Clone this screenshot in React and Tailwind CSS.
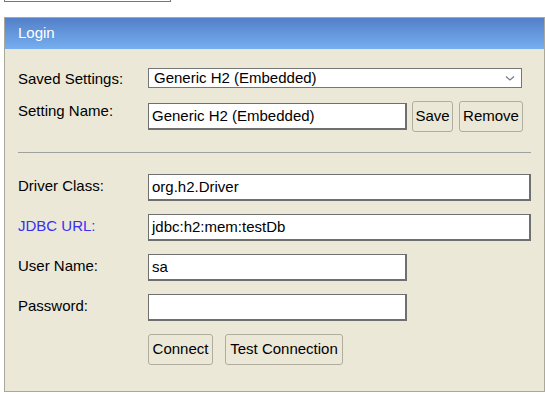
import React from "react";

const font = { fontFamily: '"Liberation Sans", Arial, sans-serif' };

function Label({ children, className = "" }) {
  return (
    <div className={"w-[130px] shrink-0 text-[15px] leading-[17px] " + className}>
      {children}
    </div>
  );
}

function TextInput({ value, w }) {
  return (
    <div
      className={
        "h-[27px] bg-white border-t border-l border-r-2 border-b-2 border-[#6f6f6f] pl-[3px] flex items-center text-[15px] text-black " +
        w
      }
    >
      {value}
    </div>
  );
}

function Btn({ children, w }) {
  return (
    <div
      className={
        "h-[31px] flex items-center justify-center rounded-[3px] border border-[#b0ad9f] bg-[#ebe8d8] text-[15px] text-black " +
        w
      }
    >
      {children}
    </div>
  );
}

export default function App() {
  return (
    <div className="w-[545px] h-[394px] bg-white overflow-hidden" style={font}>
      <div className="ml-[4px] w-[167px] h-[2px] border-l border-r border-b border-[#767676]" />
      <div className="mt-[15px] ml-[4px] w-[541px] h-[375px] border border-[#aca899] bg-[#ebe8d8] flex flex-col">
        <div className="h-[31px] bg-gradient-to-b from-[#5380c8] to-[#76aef0] text-white text-[15px] flex items-center pl-[13px]">
          Login
        </div>
        <div className="flex flex-col pl-[13px] pr-[12px] text-[#000]">
          <div className="mt-[19px] flex items-center h-[20px]">
            <Label>Saved Settings:</Label>
            <div className="w-[374px] h-[20px] bg-white border border-[#767676] flex items-center pl-[5px] pr-[6px] text-[15px]">
              <span className="flex-1">Generic H2 (Embedded)</span>
              <svg width="10" height="7" viewBox="0 0 10 7">
                <path d="M1 1.5 L5 5 L9 1.5" fill="none" stroke="#7a7a7a" strokeWidth="1.2" />
              </svg>
            </div>
          </div>
          <div className="mt-[13px] flex items-start h-[31px]">
            <Label className="pt-[1px]">Setting Name:</Label>
            <div className="mt-[2px]">
              <TextInput value="Generic H2 (Embedded)" w="w-[259px]" />
            </div>
            <div className="ml-[5px] flex gap-[6px]">
              <Btn w="w-[41px]">Save</Btn>
              <Btn w="w-[64px]">Remove</Btn>
            </div>
          </div>
          <div className="mt-[20px] h-[1px] bg-[#a0a0a0] w-[513px]" />
          <div className="mt-[21px] flex items-center">
            <Label className="-mt-[5px]">Driver Class:</Label>
            <TextInput value="org.h2.Driver" w="w-[383px]" />
          </div>
          <div className="mt-[13px] flex items-center">
            <Label className="-mt-[4px] text-[#3a2ff0]">JDBC URL:</Label>
            <TextInput value="jdbc:h2:mem:testDb" w="w-[383px]" />
          </div>
          <div className="mt-[13px] flex items-center">
            <Label className="-mt-[5px]">User Name:</Label>
            <TextInput value="sa" w="w-[259px]" />
          </div>
          <div className="mt-[13px] flex items-center">
            <Label className="-mt-[5px]">Password:</Label>
            <TextInput value="" w="w-[259px]" />
          </div>
          <div className="mt-[13px] flex">
            <div className="w-[130px]" />
            <Btn w="w-[65px]">Connect</Btn>
            <div className="ml-[12px]">
              <Btn w="w-[118px]">Test Connection</Btn>
            </div>
          </div>
        </div>
      </div>
    </div>
  );
}
